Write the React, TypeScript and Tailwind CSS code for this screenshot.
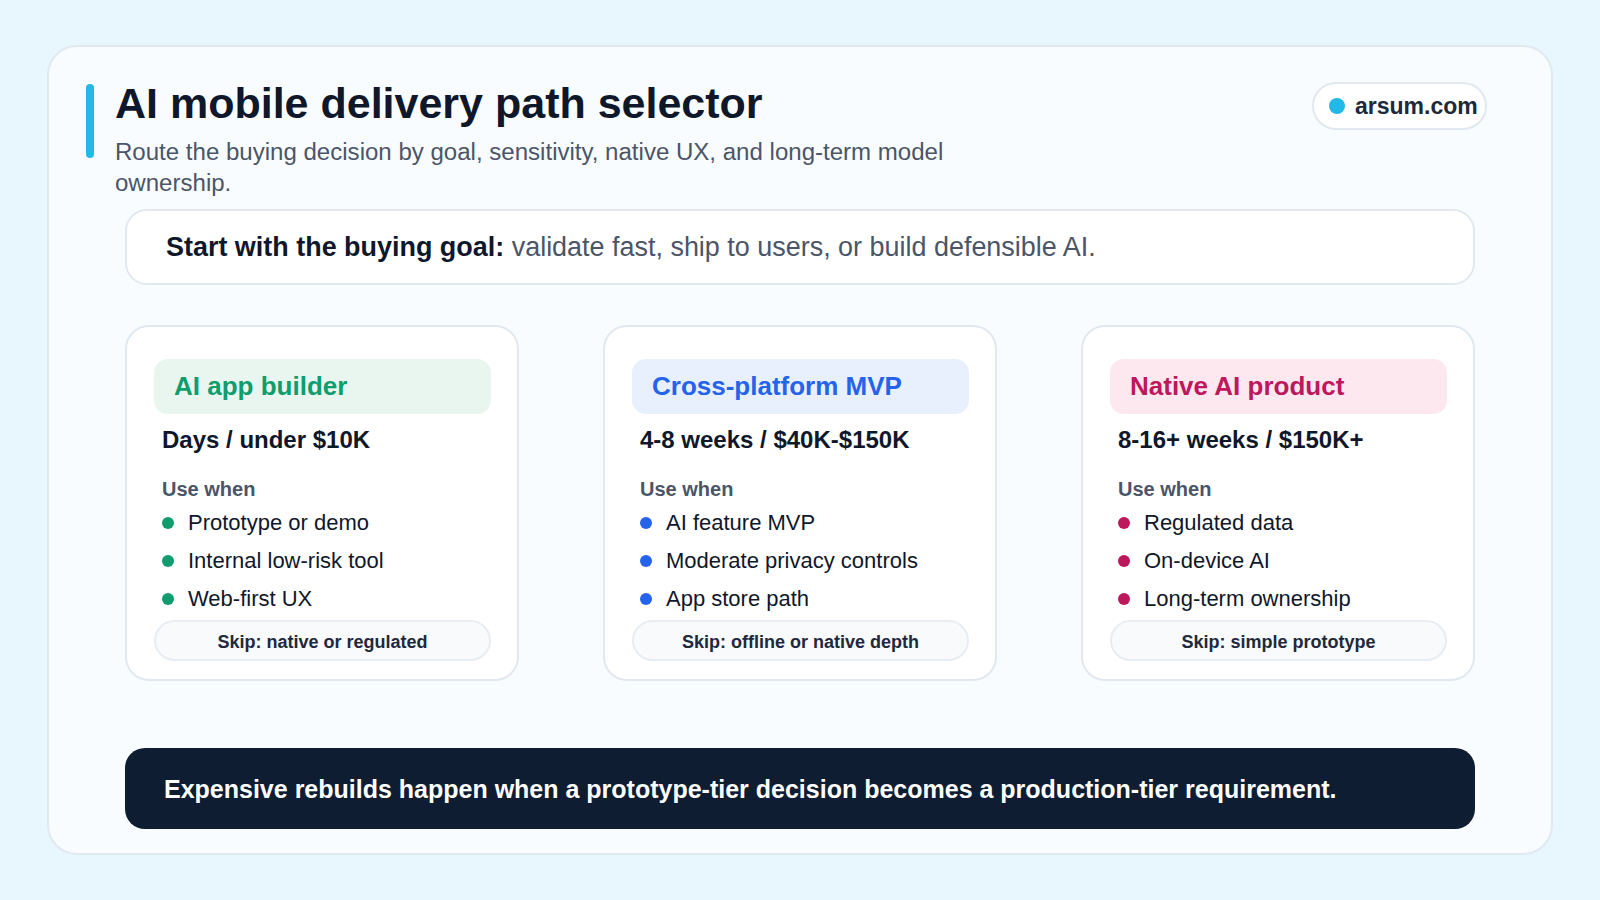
const paths = [
  {
    name: 'AI app builder',
    price: 'Days / under $10K',
    items: ['Prototype or demo', 'Internal low-risk tool', 'Web-first UX'],
    skip: 'Skip: native or regulated',
    head: 'bg-[#e8f6ef] text-[#0f9d6e]',
    dot: 'bg-[#0f9d6e]',
  },
  {
    name: 'Cross-platform MVP',
    price: '4-8 weeks / $40K-$150K',
    items: ['AI feature MVP', 'Moderate privacy controls', 'App store path'],
    skip: 'Skip: offline or native depth',
    head: 'bg-[#e8f0fe] text-[#2563eb]',
    dot: 'bg-[#2563eb]',
  },
  {
    name: 'Native AI product',
    price: '8-16+ weeks / $150K+',
    items: ['Regulated data', 'On-device AI', 'Long-term ownership'],
    skip: 'Skip: simple prototype',
    head: 'bg-[#fde8f0] text-[#be185d]',
    dot: 'bg-[#be185d]',
  },
];

const PathCard = ({ path }: { path: (typeof paths)[number] }) => (
  <div className="h-[356px] rounded-[24px] border-2 border-[#e2e8f0] bg-white pt-[32px] pr-[26px] pl-[27px]">
    <div className={`flex h-[55px] items-center rounded-[14px] px-5 text-[26px] font-bold ${path.head}`}>
      {path.name}
    </div>
    <div className="mt-[10px] px-2 text-[24px] leading-[32px] font-bold text-[#0f172a]">{path.price}</div>
    <div className="mt-[19px] px-2 text-[20px] leading-[28px] font-bold text-[#4b5568]">Use when</div>
    <ul className="px-2">
      {path.items.map((item) => (
        <li key={item} className="flex h-[38px] items-center gap-[14px] text-[22px] text-[#0f172a]">
          <span className={`mt-px h-3 w-3 shrink-0 rounded-full ${path.dot}`} />
          {item}
        </li>
      ))}
    </ul>
    <div className="mt-[3px] flex h-[41px] items-center justify-center rounded-full border-2 border-[#e8edf3] bg-[#f8fafc] pt-[3px] text-[18px] font-bold text-[#1e293b]">
      {path.skip}
    </div>
  </div>
);

export default function App() {
  return (
    <div className="h-[900px] w-[1600px] bg-[#e8f6fe] px-[47px] pt-[45px] font-['Liberation_Sans',Arial,sans-serif]">
      <div className="flex h-[810px] flex-col rounded-[30px] border-2 border-[#e2e8f0] bg-[#f9fcfe] pt-[36px] pr-[64px] pb-[24px] pl-[37px]">
        <div className="flex items-start justify-between">
          <div className="flex gap-[21px]">
            <div className="mt-px h-[74px] w-2 rounded-full bg-[#22b8e8]" />
            <div className="w-[850px]">
              <h1 className="-mt-px text-[43px] leading-[42px] font-bold text-[#0f172a]">AI mobile delivery path selector</h1>
              <p className="mt-[12px] text-[24.06px] leading-[31px] text-[#4b5568]">
                Route the buying decision by goal, sensitivity, native UX, and long-term model ownership.
              </p>
            </div>
          </div>
          <div className="-mt-px flex h-[48px] w-[175px] items-center gap-[10px] rounded-full border-2 border-[#e2e8f0] bg-white pl-[15px] text-[23px] font-bold text-[#1e293b]">
            <span className="h-4 w-4 shrink-0 rounded-full bg-[#22b8e8]" />
            arsum.com
          </div>
        </div>
        <div className="mt-[11px] ml-[39px] flex h-[76px] w-[1350px] shrink-0 items-center rounded-[22px] border-2 border-[#e2e8f0] bg-white pt-[1px] pl-[39px] text-[26.95px] text-[#4b5568]">
          <p>
            <strong className="font-bold text-[#0f172a]">Start with the buying goal:</strong> validate fast, ship to users, or build defensible AI.
          </p>
        </div>
        <div className="mt-[40px] ml-[39px] grid w-[1350px] grid-cols-[394px_394px_394px] gap-[84px]">
          {paths.map((path) => (
            <PathCard key={path.name} path={path} />
          ))}
        </div>
        <div className="mt-[67px] ml-[39px] flex h-[81px] w-[1350px] shrink-0 items-center rounded-[20px] bg-[#0f1d32] pt-[3px] pl-[39px] text-[25px] font-bold text-white">
          Expensive rebuilds happen when a prototype-tier decision becomes a production-tier requirement.
        </div>
      </div>
    </div>
  );
}
